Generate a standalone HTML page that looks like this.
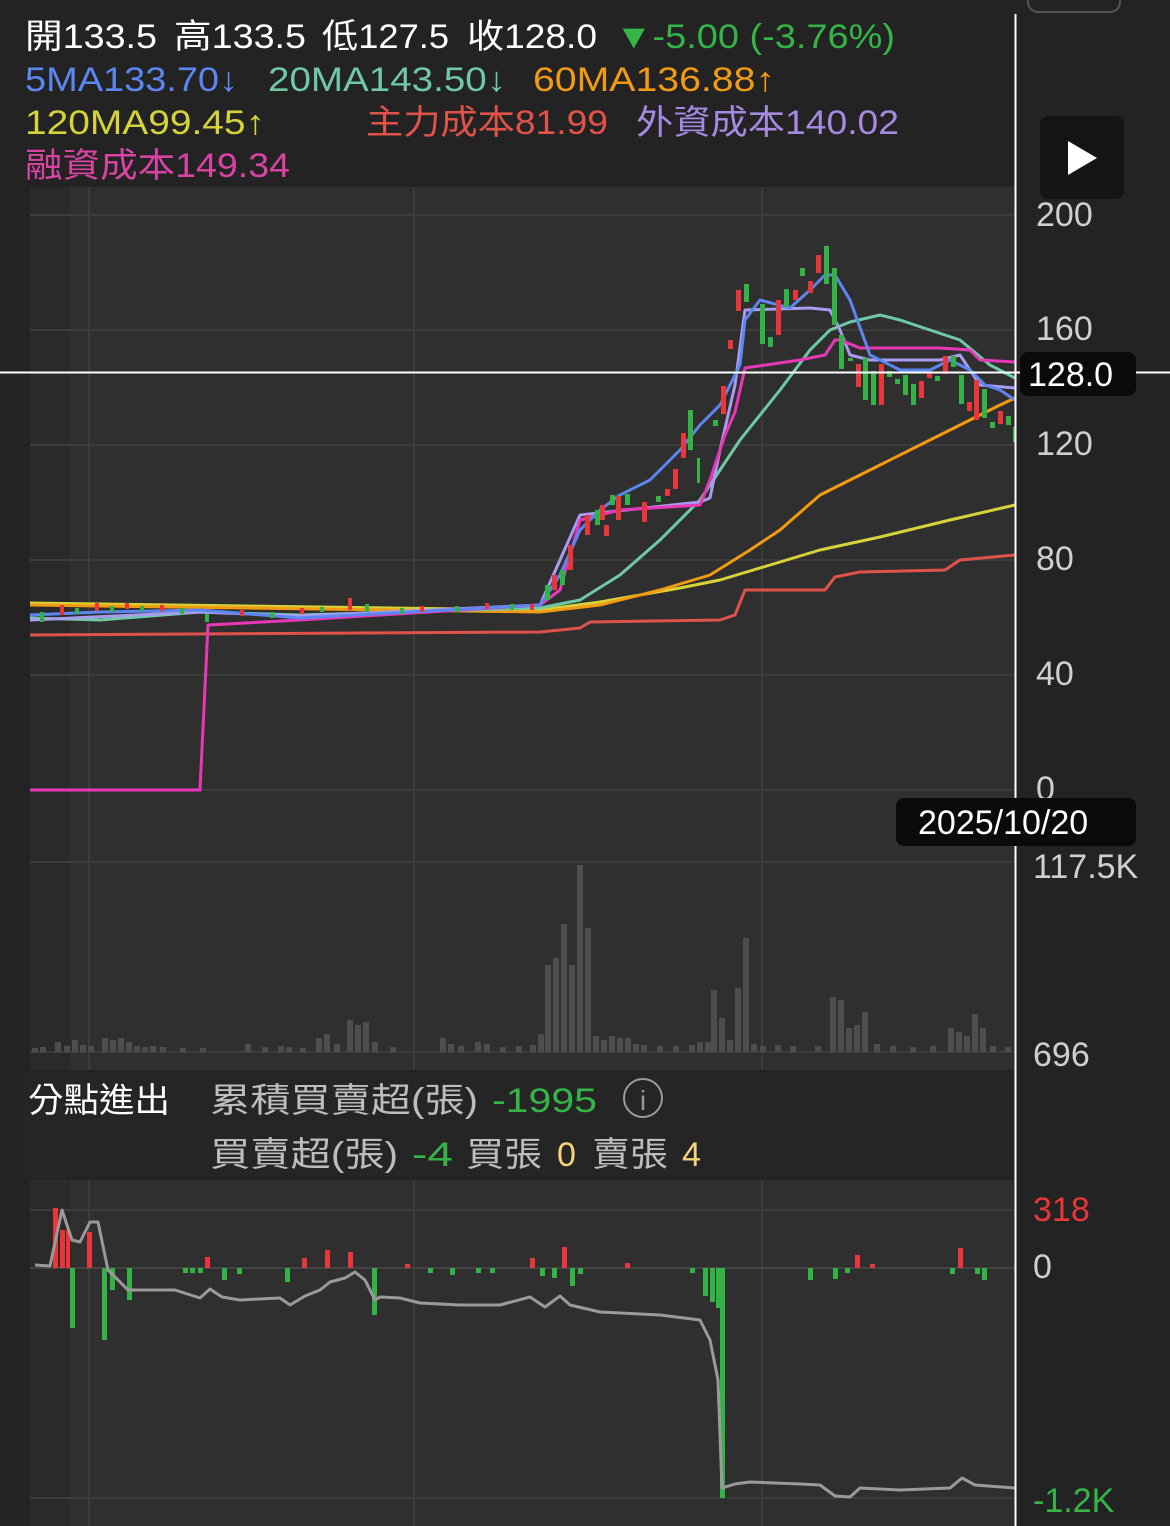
<!DOCTYPE html>
<html><head><meta charset="utf-8"><style>
html,body{margin:0;padding:0;background:#232323;width:1170px;height:1526px;overflow:hidden}
svg{display:block}
text{font-family:"Liberation Sans","Noto Sans CJK TC",sans-serif}
</style></head><body>
<svg width="1170" height="1526" viewBox="0 0 1170 1526" xmlns="http://www.w3.org/2000/svg">
<rect width="1170" height="1526" fill="#232323"/>
<rect x="30" y="187" width="985" height="883" fill="#2a2a2a"/>
<rect x="70" y="187" width="945" height="883" fill="#2f2f2f"/>
<rect x="30" y="1180" width="985" height="346" fill="#2a2a2a"/>
<rect x="70" y="1180" width="945" height="346" fill="#2f2f2f"/>
<rect x="20" y="1072" width="995" height="106" fill="#252525"/>
<g stroke="#3c3c3c" stroke-width="2">
<line x1="30" y1="215" x2="1015" y2="215"/><line x1="30" y1="330" x2="1015" y2="330"/>
<line x1="30" y1="445" x2="1015" y2="445"/><line x1="30" y1="560" x2="1015" y2="560"/>
<line x1="30" y1="675" x2="1015" y2="675"/><line x1="30" y1="790" x2="1015" y2="790"/>
<line x1="30" y1="862" x2="1015" y2="862"/><line x1="30" y1="1052" x2="1015" y2="1052"/>
<line x1="30" y1="1210" x2="1015" y2="1210"/><line x1="30" y1="1498" x2="1015" y2="1498"/>
<line x1="89" y1="187" x2="89" y2="1070"/><line x1="414" y1="187" x2="414" y2="1070"/><line x1="762" y1="187" x2="762" y2="1070"/>
<line x1="89" y1="1180" x2="89" y2="1526"/><line x1="414" y1="1180" x2="414" y2="1526"/><line x1="762" y1="1180" x2="762" y2="1526"/>
</g>
<g fill="none" stroke-width="3" stroke-linejoin="round">
<polyline stroke="#e0524a" points="30,635 540,632 580,628 590,622 720,620 735,615 745,590 825,590 835,577 860,572 945,570 960,560 1015,555"/>
<polyline stroke="#d6d33a" points="30,603 540,610 600,602 680,588 720,580 770,565 820,550 880,537 950,520 1015,505"/>
<polyline stroke="#f29a12" points="30,605 540,612 600,605 660,590 710,575 750,550 780,530 820,495 880,465 940,435 1000,405 1015,398"/>
<polyline stroke="#6fc9a4" points="30,618 100,620 200,612 300,615 540,608 580,600 620,575 660,540 700,500 740,440 780,390 810,350 830,330 850,322 880,315 900,320 930,330 960,340 990,365 1015,378"/>
<polyline stroke="#a89cf0" points="30,620 200,612 300,616 540,605 580,515 700,502 710,498 720,450 735,385 745,310 810,308 830,310 840,330 850,355 870,360 940,360 960,355 980,385 1015,388"/>
<polyline stroke="#e838b8" points="30,790 200,790 208,625 300,620 540,605 560,590 580,520 620,510 700,505 710,480 715,465 725,435 735,412 745,368 800,360 825,355 835,340 840,340 860,348 940,348 970,350 980,360 1015,362"/>
<polyline stroke="#5c86f0" points="30,615 100,612 200,610 300,618 540,605 560,575 580,530 600,510 620,495 650,480 680,450 700,425 720,405 740,365 745,320 760,300 790,308 810,290 825,275 835,275 850,300 870,355 900,370 930,370 950,360 970,370 985,385 1000,390 1015,400"/>
</g>
<g fill="#e8363a">
<rect x="60" y="605" width="4" height="10"/><rect x="95" y="603" width="4" height="8"/><rect x="125" y="603" width="4" height="6"/><rect x="160" y="605" width="4" height="6"/><rect x="240" y="610" width="4" height="6"/><rect x="300" y="608" width="4" height="6"/><rect x="348" y="598" width="4" height="12"/><rect x="420" y="606" width="4" height="6"/><rect x="485" y="603" width="4" height="6"/><rect x="530" y="604" width="4" height="6"/><rect x="552" y="575" width="5" height="15"/><rect x="568" y="545" width="5" height="25"/><rect x="585" y="515" width="5" height="20"/><rect x="600" y="505" width="5" height="15"/>
<rect x="604" y="525" width="5" height="11"/><rect x="616" y="496" width="5" height="24"/><rect x="642" y="502" width="5" height="20"/><rect x="665" y="489" width="5" height="7"/><rect x="673" y="469" width="5" height="20"/><rect x="681" y="433" width="5" height="25"/><rect x="721" y="386" width="5" height="28"/><rect x="728" y="340" width="5" height="9"/><rect x="736" y="290" width="5" height="21"/><rect x="776" y="300" width="5" height="35"/><rect x="793" y="290" width="5" height="10"/><rect x="808" y="281" width="5" height="12"/><rect x="816" y="255" width="5" height="18"/><rect x="856" y="364" width="5" height="23"/><rect x="879" y="364" width="5" height="41"/><rect x="919" y="381" width="5" height="17"/><rect x="927" y="373" width="5" height="5"/><rect x="943" y="356" width="5" height="18"/><rect x="967" y="402" width="5" height="9"/><rect x="974" y="380" width="5" height="40"/><rect x="998" y="411" width="5" height="13"/>
</g>
<g fill="#33b345">
<rect x="40" y="612" width="4" height="10"/><rect x="75" y="608" width="4" height="6"/><rect x="110" y="606" width="4" height="6"/><rect x="140" y="606" width="4" height="5"/><rect x="180" y="608" width="4" height="6"/><rect x="205" y="614" width="4" height="8"/><rect x="270" y="612" width="4" height="6"/><rect x="320" y="607" width="4" height="5"/><rect x="365" y="604" width="4" height="8"/><rect x="400" y="608" width="4" height="6"/><rect x="455" y="606" width="4" height="6"/><rect x="510" y="604" width="4" height="6"/><rect x="545" y="585" width="5" height="15"/><rect x="560" y="570" width="5" height="15"/><rect x="595" y="510" width="5" height="15"/><rect x="610" y="495" width="5" height="10"/>
<rect x="625" y="494" width="5" height="11"/><rect x="656" y="496" width="5" height="6"/><rect x="688" y="410" width="5" height="40"/><rect x="697" y="458" width="3" height="25"/><rect x="713" y="420" width="5" height="6"/><rect x="744" y="284" width="5" height="18"/><rect x="760" y="304" width="5" height="40"/><rect x="768" y="337" width="5" height="10"/><rect x="784" y="289" width="5" height="18"/><rect x="800" y="268" width="5" height="8"/><rect x="824" y="246" width="5" height="38"/><rect x="832" y="268" width="5" height="57"/><rect x="839" y="335" width="5" height="34"/><rect x="848" y="358" width="5" height="3"/><rect x="863" y="358" width="5" height="42"/><rect x="871" y="371" width="5" height="34"/><rect x="887" y="371" width="5" height="6"/><rect x="895" y="379" width="5" height="5"/><rect x="903" y="375" width="5" height="20"/><rect x="911" y="384" width="5" height="21"/><rect x="935" y="376" width="5" height="5"/><rect x="951" y="356" width="5" height="11"/><rect x="959" y="375" width="5" height="29"/><rect x="982" y="389" width="5" height="29"/><rect x="990" y="422" width="5" height="6"/><rect x="1006" y="416" width="5" height="9"/><rect x="1013" y="427" width="3" height="15"/>
</g>
<g fill="#4e4e4e">
<rect x="32" y="1048" width="6" height="4"/><rect x="40" y="1047" width="6" height="5"/><rect x="55" y="1042" width="6" height="10"/><rect x="64" y="1046" width="6" height="6"/><rect x="72" y="1040" width="6" height="12"/><rect x="80" y="1045" width="6" height="7"/><rect x="88" y="1046" width="6" height="6"/><rect x="102" y="1038" width="6" height="14"/><rect x="110" y="1040" width="6" height="12"/><rect x="118" y="1038" width="6" height="14"/><rect x="126" y="1042" width="6" height="10"/><rect x="134" y="1046" width="6" height="6"/><rect x="142" y="1047" width="6" height="5"/><rect x="150" y="1046" width="6" height="6"/><rect x="160" y="1047" width="6" height="5"/><rect x="180" y="1048" width="6" height="4"/><rect x="200" y="1048" width="6" height="4"/><rect x="245" y="1044" width="6" height="8"/><rect x="262" y="1047" width="6" height="5"/><rect x="278" y="1046" width="6" height="6"/><rect x="286" y="1047" width="6" height="5"/><rect x="300" y="1048" width="6" height="4"/><rect x="316" y="1038" width="6" height="14"/><rect x="324" y="1034" width="6" height="18"/><rect x="334" y="1044" width="6" height="8"/><rect x="347" y="1020" width="6" height="32"/><rect x="355" y="1025" width="6" height="27"/><rect x="363" y="1022" width="6" height="30"/><rect x="372" y="1042" width="6" height="10"/><rect x="390" y="1047" width="6" height="5"/><rect x="440" y="1038" width="6" height="14"/><rect x="448" y="1044" width="6" height="8"/><rect x="458" y="1046" width="6" height="6"/><rect x="475" y="1042" width="6" height="10"/><rect x="484" y="1044" width="6" height="8"/><rect x="500" y="1047" width="6" height="5"/><rect x="516" y="1046" width="6" height="6"/><rect x="530" y="1045" width="6" height="7"/><rect x="538" y="1034" width="6" height="18"/>
<rect x="545" y="965" width="6" height="87"/><rect x="553" y="958" width="6" height="94"/><rect x="561" y="924" width="6" height="128"/><rect x="569" y="965" width="6" height="87"/><rect x="577" y="865" width="6" height="187"/><rect x="585" y="928" width="6" height="124"/><rect x="593" y="1036" width="6" height="16"/><rect x="601" y="1040" width="6" height="12"/><rect x="609" y="1036" width="6" height="16"/><rect x="617" y="1038" width="6" height="14"/><rect x="625" y="1038" width="6" height="14"/><rect x="633" y="1044" width="6" height="8"/><rect x="641" y="1045" width="6" height="7"/><rect x="657" y="1046" width="6" height="6"/><rect x="673" y="1046" width="6" height="6"/><rect x="689" y="1045" width="6" height="7"/><rect x="697" y="1042" width="6" height="10"/><rect x="705" y="1042" width="6" height="10"/>
<rect x="711" y="990" width="6" height="62"/><rect x="719" y="1018" width="6" height="34"/><rect x="727" y="1040" width="6" height="12"/><rect x="735" y="988" width="6" height="64"/><rect x="743" y="938" width="6" height="114"/><rect x="751" y="1044" width="6" height="8"/><rect x="760" y="1046" width="6" height="6"/><rect x="775" y="1045" width="6" height="7"/><rect x="790" y="1046" width="6" height="6"/><rect x="815" y="1046" width="6" height="6"/><rect x="830" y="997" width="6" height="55"/><rect x="838" y="1000" width="6" height="52"/><rect x="846" y="1028" width="6" height="24"/><rect x="854" y="1025" width="6" height="27"/><rect x="862" y="1012" width="6" height="40"/><rect x="874" y="1044" width="6" height="8"/><rect x="890" y="1046" width="6" height="6"/><rect x="910" y="1047" width="6" height="5"/><rect x="930" y="1046" width="6" height="6"/><rect x="948" y="1028" width="6" height="24"/><rect x="956" y="1032" width="6" height="20"/><rect x="964" y="1036" width="6" height="16"/><rect x="972" y="1014" width="6" height="38"/><rect x="980" y="1028" width="6" height="24"/><rect x="990" y="1046" width="6" height="6"/><rect x="1005" y="1047" width="6" height="5"/>
</g>
<line x1="30" y1="1268" x2="1015" y2="1268" stroke="#444" stroke-width="2"/>
<g fill="#e8363a">
<rect x="53" y="1208" width="5" height="60"/><rect x="60" y="1230" width="5" height="38"/><rect x="66" y="1230" width="4" height="38"/><rect x="87" y="1232" width="5" height="36"/><rect x="205" y="1257" width="5" height="11"/><rect x="302" y="1258" width="5" height="10"/><rect x="325" y="1250" width="5" height="18"/><rect x="348" y="1252" width="5" height="16"/><rect x="405" y="1264" width="5" height="4"/><rect x="530" y="1258" width="5" height="10"/><rect x="562" y="1247" width="5" height="21"/><rect x="625" y="1263" width="5" height="5"/><rect x="855" y="1255" width="5" height="13"/><rect x="870" y="1264" width="5" height="4"/><rect x="958" y="1248" width="5" height="20"/>
</g>
<g fill="#33b345">
<rect x="70" y="1268" width="5" height="60"/><rect x="102" y="1268" width="5" height="72"/><rect x="110" y="1268" width="5" height="22"/><rect x="127" y="1268" width="5" height="32"/><rect x="183" y="1268" width="5" height="5"/><rect x="190" y="1268" width="5" height="5"/><rect x="198" y="1268" width="5" height="5"/><rect x="222" y="1268" width="5" height="12"/><rect x="237" y="1268" width="5" height="6"/><rect x="285" y="1268" width="5" height="14"/><rect x="372" y="1268" width="5" height="47"/><rect x="428" y="1268" width="5" height="5"/><rect x="450" y="1268" width="5" height="7"/><rect x="476" y="1268" width="5" height="5"/><rect x="490" y="1268" width="5" height="5"/><rect x="540" y="1268" width="5" height="8"/><rect x="552" y="1268" width="5" height="10"/><rect x="570" y="1268" width="5" height="18"/><rect x="578" y="1268" width="5" height="6"/><rect x="690" y="1268" width="5" height="5"/><rect x="703" y="1268" width="5" height="28"/><rect x="710" y="1268" width="5" height="34"/><rect x="716" y="1268" width="5" height="40"/><rect x="720" y="1268" width="5" height="230"/><rect x="808" y="1268" width="5" height="12"/><rect x="833" y="1268" width="5" height="11"/><rect x="845" y="1268" width="5" height="5"/><rect x="950" y="1268" width="5" height="6"/><rect x="975" y="1268" width="5" height="6"/><rect x="982" y="1268" width="5" height="12"/>
</g>
<polyline fill="none" stroke="#9a9a9a" stroke-width="3" stroke-linejoin="round" points="35,1265 50,1266 62,1210 72,1240 80,1242 90,1222 98,1222 108,1270 128,1290 175,1290 200,1298 210,1289 222,1297 240,1300 280,1298 290,1305 305,1296 320,1290 330,1282 345,1278 355,1272 365,1280 375,1300 380,1297 400,1298 420,1303 460,1305 500,1305 530,1297 545,1307 560,1296 570,1305 600,1312 660,1315 700,1320 710,1340 718,1380 722,1488 735,1484 750,1482 800,1484 820,1485 835,1496 850,1497 860,1488 900,1490 950,1488 962,1478 975,1485 1015,1488"/>
<line x1="1015.5" y1="14" x2="1015.5" y2="1526" stroke="#fff" stroke-width="2"/>
<line x1="0" y1="372.5" x2="1170" y2="372.5" stroke="#fff" stroke-width="2"/>
<g font-size="34" lengthAdjust="spacingAndGlyphs">
<text x="25" y="48" fill="#fff" textLength="132" lengthAdjust="spacingAndGlyphs">開133.5</text>
<text x="174" y="48" fill="#fff" textLength="132" lengthAdjust="spacingAndGlyphs">高133.5</text>
<text x="322" y="48" fill="#fff" textLength="127" lengthAdjust="spacingAndGlyphs">低127.5</text>
<text x="467" y="48" fill="#fff" textLength="130" lengthAdjust="spacingAndGlyphs">收128.0</text>
<text x="615" y="48" fill="#35b548" textLength="280" lengthAdjust="spacingAndGlyphs">▼-5.00 (-3.76%)</text>
<text x="25" y="91" fill="#5c86f0" textLength="213" lengthAdjust="spacingAndGlyphs">5MA133.70↓</text>
<text x="268" y="91" fill="#6fc9a4" textLength="238" lengthAdjust="spacingAndGlyphs">20MA143.50↓</text>
<text x="533" y="91" fill="#f29a12" textLength="242" lengthAdjust="spacingAndGlyphs">60MA136.88↑</text>
<text x="25" y="134" fill="#d6d33a" textLength="240" lengthAdjust="spacingAndGlyphs">120MA99.45↑</text>
<text x="366" y="134" fill="#e0524a" textLength="242" lengthAdjust="spacingAndGlyphs">主力成本81.99</text>
<text x="636" y="134" fill="#a68ae0" textLength="263" lengthAdjust="spacingAndGlyphs">外資成本140.02</text>
<text x="25" y="177" fill="#d944a4" textLength="265" lengthAdjust="spacingAndGlyphs">融資成本149.34</text>
</g>
<rect x="1028" y="-20" width="92" height="32" rx="10" fill="none" stroke="#555" stroke-width="2"/>
<rect x="1040" y="116" width="84" height="83" rx="8" fill="#141414"/>
<polygon points="1068,141 1068,175 1097,158" fill="#fff"/>
<g font-size="34" fill="#cfcfcf">
<text x="1036" y="226">200</text><text x="1036" y="340">160</text><text x="1036" y="455">120</text>
<text x="1036" y="570">80</text><text x="1036" y="685">40</text><text x="1036" y="800">0</text>
<text x="1033" y="878">117.5K</text><text x="1033" y="1066">696</text>
<text x="1033" y="1278">0</text>
</g>
<text x="1033" y="1221" font-size="34" fill="#e8363a">318</text>
<text x="1033" y="1512" font-size="34" fill="#35b548">-1.2K</text>
<rect x="1020" y="352" width="116" height="44" rx="8" fill="#0a0a0a"/>
<text x="1028" y="386" font-size="34" fill="#fff">128.0</text>
<rect x="896" y="798" width="240" height="48" rx="8" fill="#0a0a0a"/>
<text x="918" y="834" font-size="34" fill="#fff">2025/10/20</text>
<g font-size="34">
<text x="28" y="1112" fill="#fff" textLength="142" lengthAdjust="spacingAndGlyphs">分點進出</text>
<text x="210" y="1112" fill="#bdbdbd" textLength="268" lengthAdjust="spacingAndGlyphs">累積買賣超(張)</text>
<text x="492" y="1112" fill="#35b548" textLength="105" lengthAdjust="spacingAndGlyphs">-1995</text>
<text x="210" y="1166" fill="#bdbdbd" textLength="188" lengthAdjust="spacingAndGlyphs">買賣超(張)</text>
<text x="412" y="1166" fill="#35b548" textLength="41" lengthAdjust="spacingAndGlyphs">-4</text>
<text x="466" y="1166" fill="#bdbdbd" textLength="76" lengthAdjust="spacingAndGlyphs">買張</text>
<text x="557" y="1166" fill="#f7d37a">0</text>
<text x="592" y="1166" fill="#bdbdbd" textLength="76" lengthAdjust="spacingAndGlyphs">賣張</text>
<text x="682" y="1166" fill="#f7d37a">4</text>
</g>
<circle cx="643" cy="1098" r="19" fill="none" stroke="#9a9a9a" stroke-width="2"/>
<text x="643" y="1110" font-size="28" fill="#9a9a9a" text-anchor="middle" font-family="Liberation Serif,serif">i</text>
</svg>
</body></html>
